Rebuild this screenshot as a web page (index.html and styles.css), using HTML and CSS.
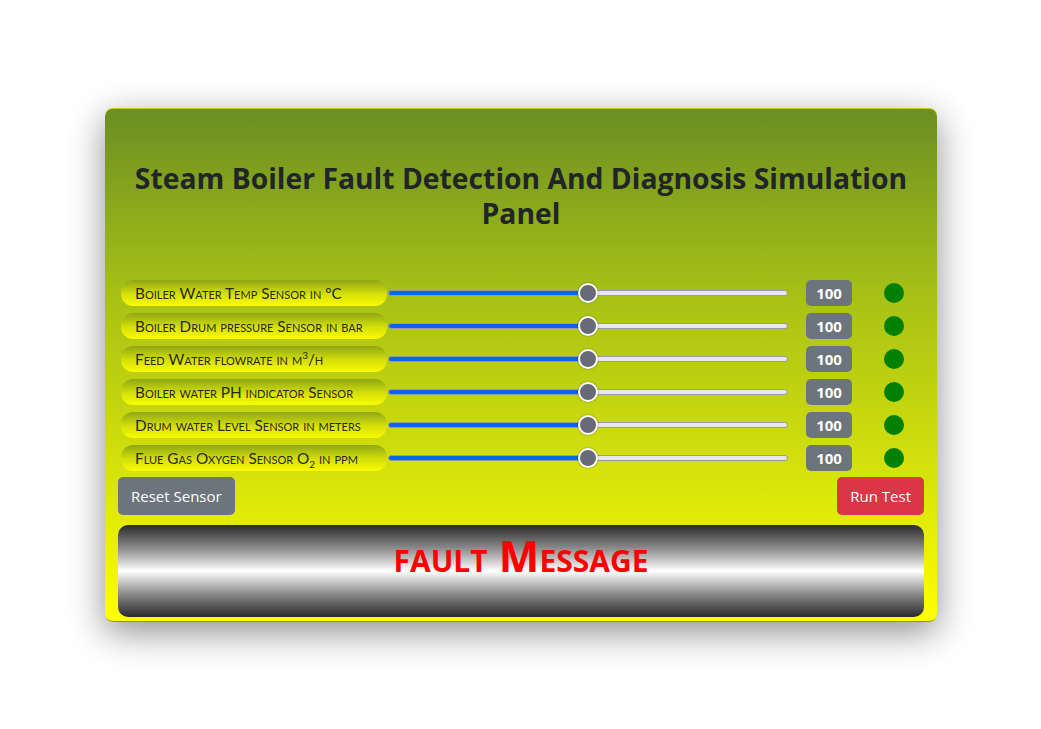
FILE: index.html
```html
<!DOCTYPE html>
<html lang="en">
<head>
<meta charset="utf-8">
<title>Steam Boiler Fault Detection</title>
<link rel="stylesheet" href="styles.css">
</head>
<body>
<div class="card">
  <h1 class="title">Steam Boiler Fault Detection And Diagnosis Simulation Panel</h1>
  <div class="rows">
    <div class="row">
      <div class="label">Boiler Water Temp Sensor in °C</div>
      <input class="slider" type="range" min="0" max="200" value="100">
      <div class="value">100</div>
      <div class="dot"></div>
    </div>
    <div class="row">
      <div class="label">Boiler Drum pressure Sensor in bar</div>
      <input class="slider" type="range" min="0" max="200" value="100">
      <div class="value">100</div>
      <div class="dot"></div>
    </div>
    <div class="row">
      <div class="label">Feed Water flowrate in m<sup>3</sup>/h</div>
      <input class="slider" type="range" min="0" max="200" value="100">
      <div class="value">100</div>
      <div class="dot"></div>
    </div>
    <div class="row">
      <div class="label">Boiler water PH indicator Sensor</div>
      <input class="slider" type="range" min="0" max="200" value="100">
      <div class="value">100</div>
      <div class="dot"></div>
    </div>
    <div class="row">
      <div class="label">Drum water Level Sensor in meters</div>
      <input class="slider" type="range" min="0" max="200" value="100">
      <div class="value">100</div>
      <div class="dot"></div>
    </div>
    <div class="row">
      <div class="label">Flue Gas Oxygen Sensor O<sub>2</sub> in ppm</div>
      <input class="slider" type="range" min="0" max="200" value="100">
      <div class="value">100</div>
      <div class="dot"></div>
    </div>
  </div>
  <div class="actions">
    <button class="btn btn-reset">Reset Sensor</button>
    <button class="btn btn-run">Run Test</button>
  </div>
  <div class="fault">fault Message</div>
</div>
</body>
</html>
```

FILE: styles.css
```css
* { box-sizing: border-box; }
html, body { margin: 0; padding: 0; background: #fff; }
body {
  font-family: "Open Sans", "Noto Sans", sans-serif;
  color: #212529;
  padding-top: 108px;
  min-height: 729px;
}
.card {
  width: 832px;
  margin: 0 0 0 105px;
  border-top: 1px solid #d8c800;
  border-bottom: 1px solid #8a9a10;
  border-radius: 8px;
  background: linear-gradient(to bottom, #6b8e23 0%, #a5bf16 35%, #dbe60a 75%, #ffff00 100%);
  box-shadow: 0 10px 36px rgba(0,0,0,0.45);
  padding: 0 13px 4px 13px;
}
.title {
  margin: 0;
  padding: 52px 16px 0;
  font-size: 28.3px;
  line-height: 35px;
  font-weight: 700;
  text-align: center;
  color: #212529;
  height: 171px;
}
.rows { display: flex; flex-direction: column; gap: 7px; padding-left: 3px; }
.row { display: flex; align-items: center; height: 26px; }
.label {
  width: 266px;
  height: 26px;
  border-radius: 12px;
  background: linear-gradient(to bottom, #8ea715 0%, #d6e008 55%, #fbfb00 100%);
  font-family: "Lato", "Open Sans", sans-serif;
  font-variant: small-caps;
  font-size: 15.3px;
  line-height: 26px;
  padding-left: 14px;
  color: #2a2a10;
  white-space: nowrap;
}
.label sup, .label sub { font-size: 10px; line-height: 0; }
.slider {
  -webkit-appearance: none;
  appearance: none;
  width: 400px;
  height: 6px;
  margin: 0 0 0 1px;
  border-radius: 3px;
  border: 1px solid #9a9aa2;
  background: linear-gradient(to right, #0a64f0 0%, #0a64f0 50%, #e8e8ec 50%, #e8e8ec 100%);
  outline: none;
}
.slider::-webkit-slider-thumb {
  -webkit-appearance: none;
  appearance: none;
  width: 20px;
  height: 20px;
  border-radius: 50%;
  background: #696a78;
  border: 2px solid #fff;
  box-shadow: 0 0 2px rgba(0,0,0,0.4);
  cursor: pointer;
}
.value {
  margin-left: 18px;
  width: 46px;
  height: 26px;
  border-radius: 5px;
  background: #6c757d;
  color: #fff;
  font-weight: 700;
  font-size: 15px;
  line-height: 26px;
  text-align: center;
}
.dot {
  margin-left: 32px;
  width: 20px;
  height: 20px;
  border-radius: 50%;
  background: #008000;
}
.actions {
  display: flex;
  justify-content: space-between;
  margin-top: 6px;
}
.btn {
  font-family: "Open Sans", "Noto Sans", sans-serif;
  font-size: 15px;
  color: #fff;
  border: none;
  border-radius: 5px;
  height: 38px;
  padding: 0 13px;
}
.btn-reset { background: #6c757d; }
.btn-run { background: #dc3545; }
.fault {
  margin-top: 10px;
  height: 92px;
  border-radius: 10px;
  background: linear-gradient(to bottom, #2a2a2a 0%, #8a8a8a 25%, #ffffff 50%, #8a8a8a 75%, #2a2a2a 100%);
  color: #ff0000;
  font-weight: 700;
  font-variant: small-caps;
  font-size: 43px;
  text-align: center;
  line-height: 62px;
}
```
